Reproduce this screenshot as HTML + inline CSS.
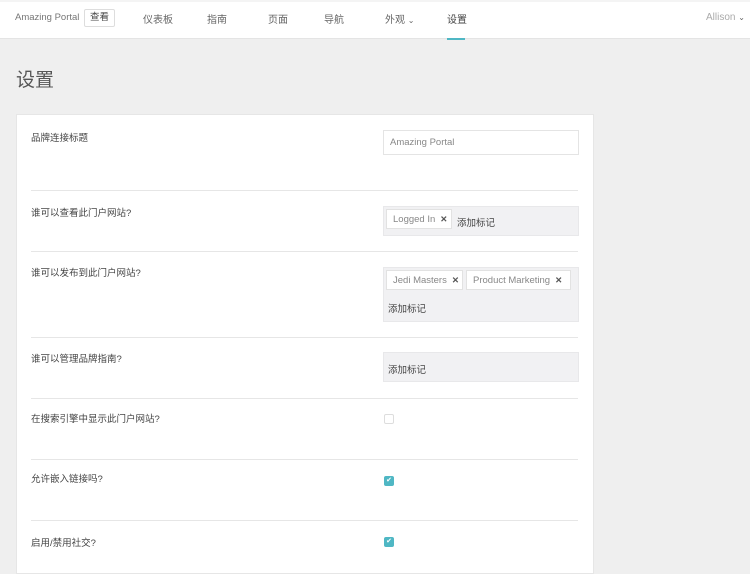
<!DOCTYPE html>
<html><head><meta charset="utf-8"><style>
*{box-sizing:border-box;margin:0;padding:0}
body{width:750px;height:564px;overflow:hidden;background:#efefef;font-family:"Liberation Sans","Noto Sans CJK SC",sans-serif;color:#555;position:relative}
.nav{position:absolute;top:2px;left:0;width:750px;height:37px;background:#fff;border-bottom:1px solid #e4e4e4}
.topstrip{position:absolute;top:0;left:0;width:750px;height:2px;background:#f4f4f4}
.t{position:absolute;font-size:10px;color:#666;white-space:nowrap}
.a{position:absolute;left:447px;top:36px;width:18px;height:2px;background:#4fb7c4}
.btn{position:absolute;left:84px;top:7px;width:31px;height:18px;border:1px solid #ddd;border-radius:2px;font-size:9.5px;text-align:center;line-height:16px;color:#444}
h1{position:absolute;left:16px;top:65px;font-size:19px;font-weight:normal;color:#555}
.card{position:absolute;left:16px;top:114px;width:578px;height:460px;background:#fff;border:1px solid #e6e6e6}
.lbl{position:absolute;left:31px;font-size:9.5px;color:#444}
.hr{position:absolute;left:31px;width:547px;height:1px;background:#e6e6e6}
.inp{position:absolute;left:383px;width:196px;background:#f1f1f3;border:1px solid #e8e8ea}
.tag{position:absolute;background:#fff;border:1px solid #e2e2e2;height:20px;font-size:9.5px;color:#888;line-height:18px;padding-left:6px;white-space:nowrap;overflow:hidden}
.tag b{color:#555;margin-left:5px;font-size:8.5px}
.add{position:absolute;font-size:9.5px;color:#444}
.cb{position:absolute;left:384px;width:10px;height:10px;border-radius:2px}
</style></head><body>
<div class="topstrip"></div>
<div class="nav">
<span class="t" style="left:15px;top:10px;color:#777;font-size:9.5px">Amazing Portal</span>
<div class="btn">查看</div>
<span class="t" style="left:143px;top:9px">仪表板</span>
<span class="t" style="left:207px;top:9px">指南</span>
<span class="t" style="left:268px;top:9px">页面</span>
<span class="t" style="left:324px;top:9px">导航</span>
<span class="t" style="left:385px;top:9px">外观 <span style="font-size:8px">⌄</span></span>
<span class="t" style="left:447px;top:9px;color:#444">设置</span>
<div class="a"></div>
<span class="t" style="left:706px;top:10px;color:#aaa">Allison <span style="color:#666;font-size:8px">⌄</span></span>
</div>
<h1>设置</h1>
<div class="card"></div>
<div class="lbl" style="top:130px">品牌连接标题</div>
<div class="inp" style="top:130px;height:25px;background:#fff;border-color:#e4e4e4"><span style="position:absolute;left:6px;top:6px;font-size:9.5px;color:#888">Amazing Portal</span></div>
<div class="hr" style="top:190px"></div>
<div class="lbl" style="top:205px">谁可以查看此门户网站?</div>
<div class="inp" style="top:206px;height:30px"></div>
<div class="tag" style="left:386px;top:209px;width:66px">Logged In<b>✕</b></div>
<div class="add" style="left:457px;top:215px">添加标记</div>
<div class="hr" style="top:251px"></div>
<div class="lbl" style="top:265px">谁可以发布到此门户网站?</div>
<div class="inp" style="top:267px;height:55px"></div>
<div class="tag" style="left:386px;top:270px;width:77px">Jedi Masters<b>✕</b></div>
<div class="tag" style="left:466px;top:270px;width:105px">Product Marketing<b>✕</b></div>
<div class="add" style="left:388px;top:301px">添加标记</div>
<div class="hr" style="top:337px"></div>
<div class="lbl" style="top:351px">谁可以管理品牌指南?</div>
<div class="inp" style="top:352px;height:30px"></div>
<div class="add" style="left:388px;top:362px">添加标记</div>
<div class="hr" style="top:398px"></div>
<div class="lbl" style="top:411px">在搜索引擎中显示此门户网站?</div>
<div class="cb" style="top:414px;border:1px solid #ddd"></div>
<div class="hr" style="top:459px"></div>
<div class="lbl" style="top:471px">允许嵌入链接吗?</div>
<div class="cb" style="top:476px;background:#4fb7c4;color:#fff;font-size:7px;line-height:10px;text-align:center">✔</div>
<div class="hr" style="top:520px"></div>
<div class="lbl" style="top:535px">启用/禁用社交?</div>
<div class="cb" style="top:537px;background:#4fb7c4;color:#fff;font-size:7px;line-height:10px;text-align:center">✔</div>
</body></html>
